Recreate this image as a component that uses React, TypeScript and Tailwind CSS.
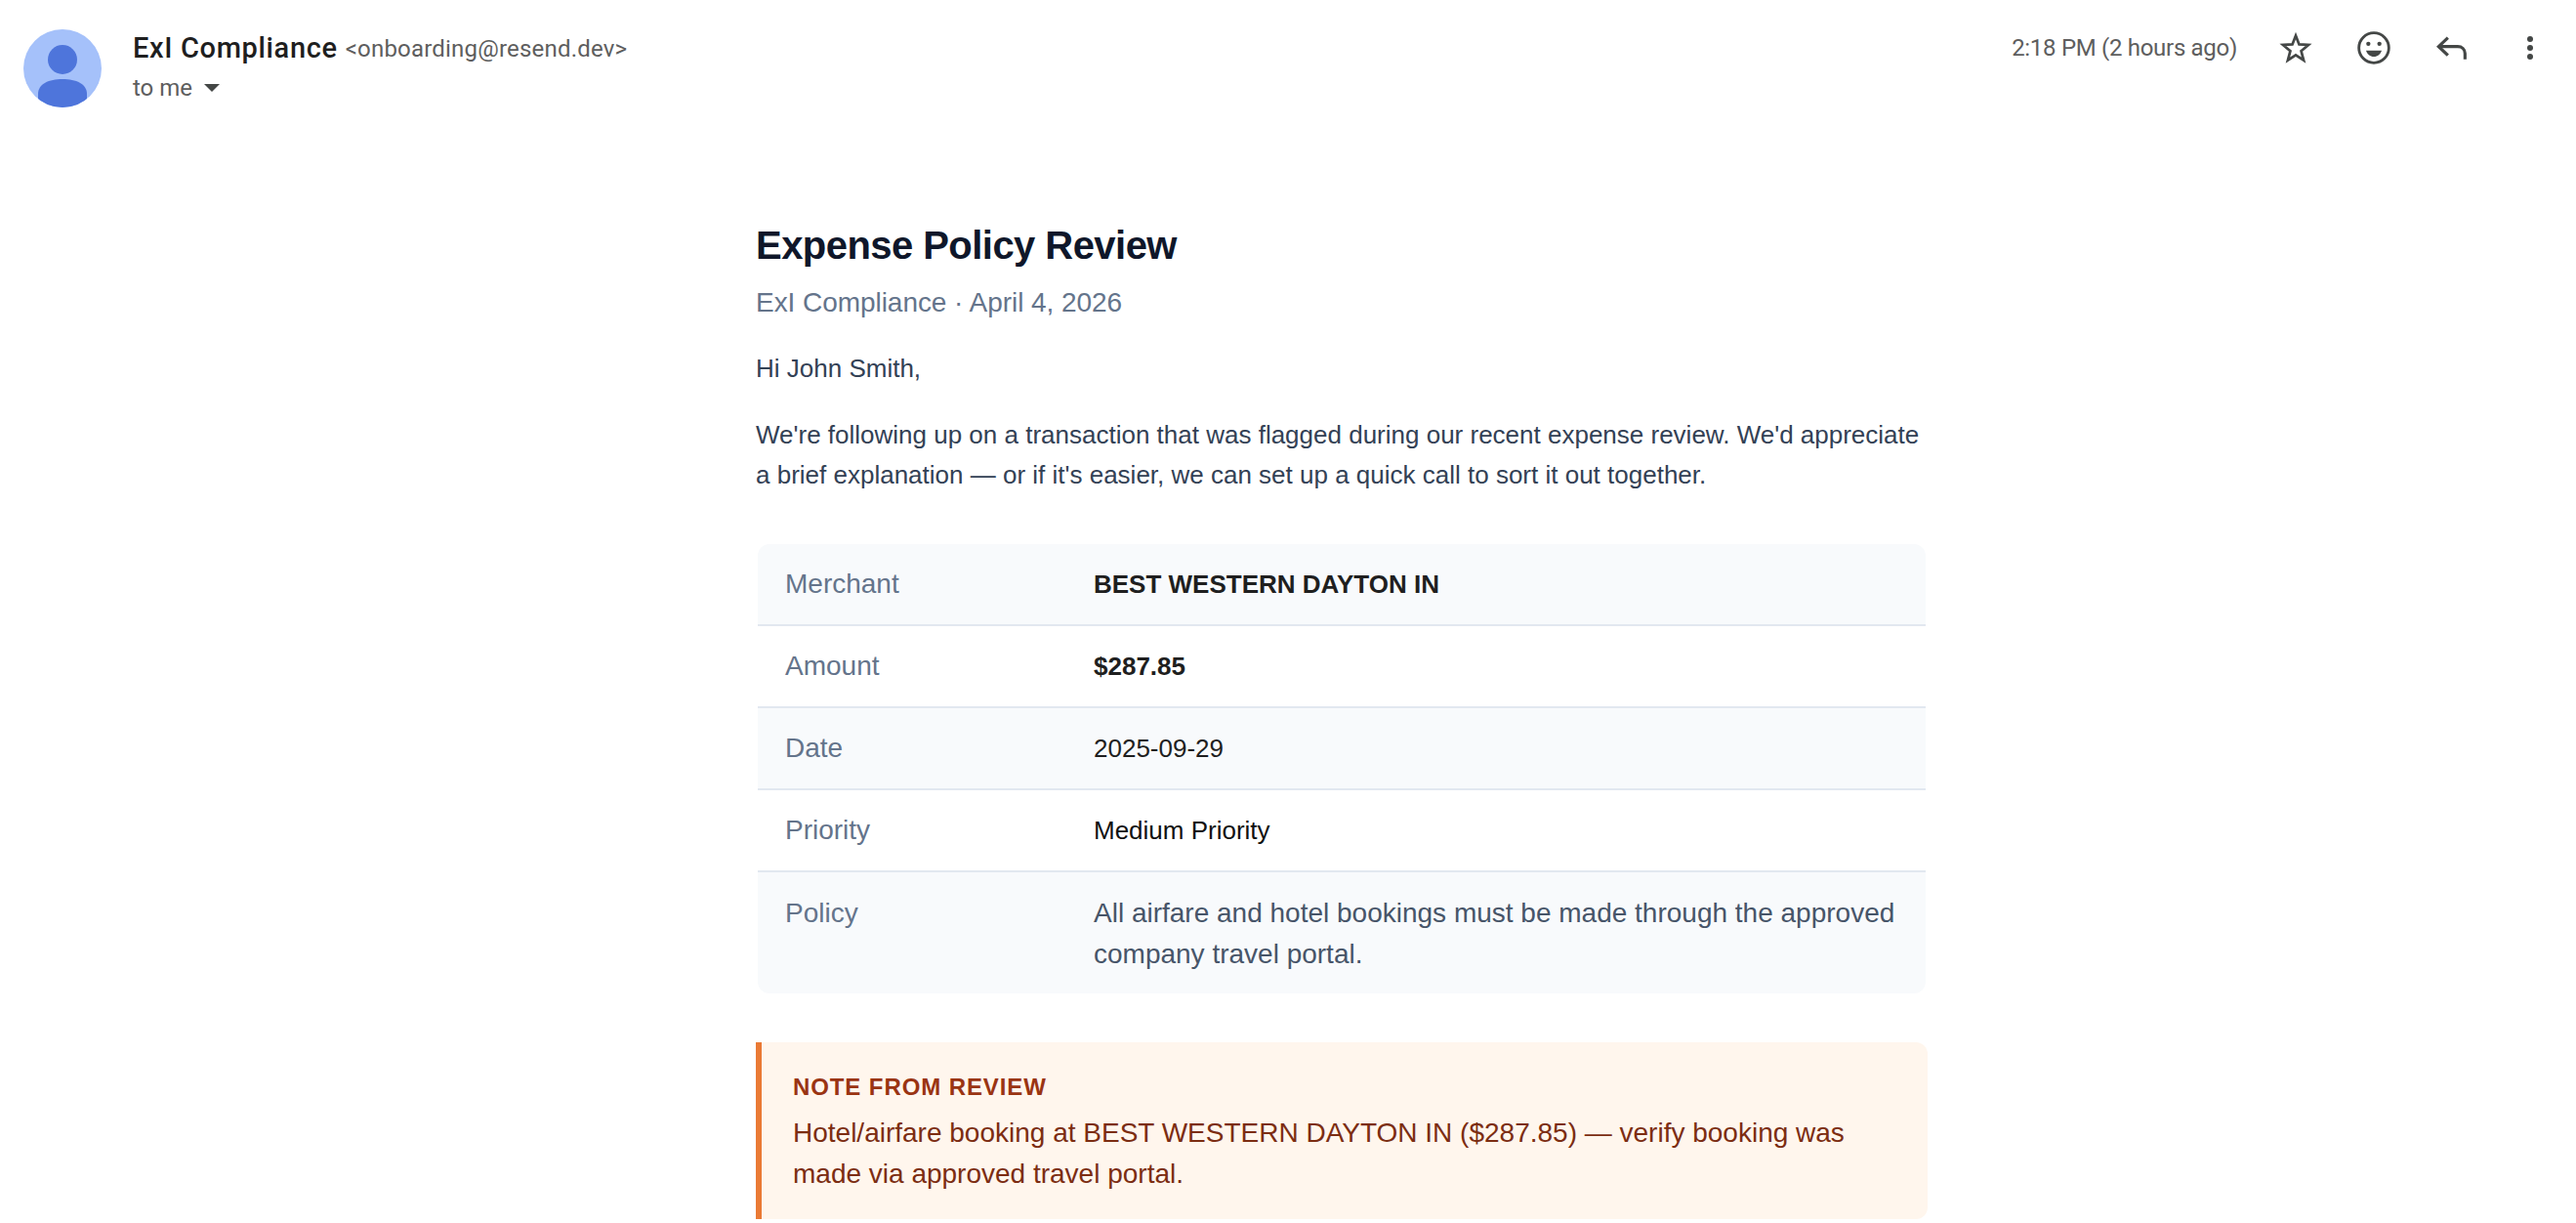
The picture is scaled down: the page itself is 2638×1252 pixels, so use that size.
const rows = [
  { label: "Merchant", value: "BEST WESTERN DAYTON IN", valueClass: "text-[26px] font-bold text-[#1f1f1f]", bg: "bg-[#f8fafc]" },
  { label: "Amount", value: "$287.85", valueClass: "text-[26px] font-bold text-[#1f1f1f]", bg: "bg-white" },
  { label: "Date", value: "2025-09-29", valueClass: "text-[26px] text-[#1f1f1f]", bg: "bg-[#f8fafc]" },
  { label: "Priority", value: "Medium Priority", valueClass: "text-[26px] text-[#111]", bg: "bg-white" },
];

function Avatar() {
  return (
    <svg width="80" height="80" viewBox="0 0 80 80" className="shrink-0">
      <defs>
        <clipPath id="avatar-clip">
          <circle cx="40" cy="40" r="40" />
        </clipPath>
      </defs>
      <circle cx="40" cy="40" r="40" fill="#a5c1fa" />
      <g clipPath="url(#avatar-clip)" fill="#4e75db">
        <ellipse cx="40" cy="31" rx="15" ry="15" />
        <path d="M15 80V66c0-10 11-15 25-15s25 5 25 15v14z" />
      </g>
    </svg>
  );
}

function IconButton({ children }: { children: React.ReactNode }) {
  return <button className="flex h-20 w-20 items-center justify-center text-[#444746]">{children}</button>;
}

export default function App() {
  return (
    <div className="h-[1252px] w-full overflow-hidden bg-white font-['Liberation_Sans',sans-serif]">
      <header className="flex h-[112px] items-start justify-between pl-6 pr-[7px] pt-[30px] font-['Roboto',sans-serif]">
        <div className="flex gap-8">
          <Avatar />
          <div className="flex flex-col">
            <div className="flex h-10 items-center">
              <span className="text-[29px] font-medium tracking-[0.65px] text-[#1f1f1f]">ExI Compliance</span>
              <span className="ml-2 text-[24px] tracking-[0.2px] text-[#5e5e5e]">&lt;onboarding@resend.dev&gt;</span>
            </div>
            <div className="flex h-10 items-center gap-3 text-[24px] text-[#5e5e5e]">
              to me
              <svg width="16" height="8" viewBox="0 0 16 8" fill="#444746">
                <path d="M0 0h16L8 8z" />
              </svg>
            </div>
          </div>
        </div>
        <div className="-mt-[21px] flex items-center">
          <span className="mr-5 text-[24px] tracking-[-0.3px] text-[#5e5e5e]">2:18 PM (2 hours ago)</span>
          <IconButton>
            <svg width="36" height="36" viewBox="0 0 24 24" fill="none" stroke="currentColor" strokeWidth="1.8" strokeLinejoin="miter">
              <path d="M12 3.6l2.3 6 6.4.4-5 4.1 1.7 6.3-5.4-3.5-5.4 3.5 1.7-6.3-5-4.1 6.4-.4z" />
            </svg>
          </IconButton>
          <IconButton>
            <svg width="40" height="40" viewBox="0 0 24 24" fill="none" stroke="currentColor" strokeWidth="1.7">
              <circle cx="12" cy="12" r="9.2" />
              <circle cx="8.6" cy="9.5" r="1.3" fill="currentColor" stroke="none" />
              <circle cx="15.4" cy="9.5" r="1.3" fill="currentColor" stroke="none" />
              <path d="M7.2 13.6h9.6c-.6 2.2-2.5 3.8-4.8 3.8s-4.2-1.6-4.8-3.8z" fill="currentColor" stroke="none" />
            </svg>
          </IconButton>
          <IconButton>
            <svg width="40" height="40" viewBox="0 0 24 24" fill="none" stroke="currentColor" strokeWidth="1.9">
              <path d="M9.5 5.8L3.8 11.2l5.7 5.4" />
              <path d="M4 11.2h11.5c2.6 0 4.5 1.6 4.5 4.3v3.6" />
            </svg>
          </IconButton>
          <IconButton>
            <svg width="40" height="40" viewBox="0 0 24 24" fill="currentColor">
              <circle cx="12" cy="6.6" r="1.8" />
              <circle cx="12" cy="12" r="1.8" />
              <circle cx="12" cy="17.4" r="1.8" />
            </svg>
          </IconButton>
        </div>
      </header>

      <main className="ml-[774px] w-[1200px] pt-[114px]">
        <h1 className="text-[40px] font-bold leading-[50px] tracking-[-0.55px] text-[#0f172a]">Expense Policy Review</h1>
        <p className="mt-[13px] text-[28px] leading-[42px] tracking-[-0.05px] text-[#64748b]">ExI Compliance · April 4, 2026</p>
        <p className="mt-[25px] text-[26px] leading-[42px] text-[#334155]">Hi John Smith,</p>
        <p className="mt-[27px] text-[26px] leading-[41px] text-[#334155]">
          We're following up on a transaction that was flagged during our recent expense review. We'd appreciate a brief
          explanation — or if it's easier, we can set up a quick call to sort it out together.
        </p>

        <div className="ml-[2px] mt-[50px] w-[1196px] overflow-hidden rounded-xl">
          {rows.map((row) => (
            <div key={row.label} className={`flex h-[84px] items-center border-b-2 border-[#e2e8f0] ${row.bg}`}>
              <div className="w-[344px] shrink-0 pl-[28px] text-[28px] text-[#64748b]">{row.label}</div>
              <div className={row.valueClass}>{row.value}</div>
            </div>
          ))}
          <div className="flex h-[124px] items-start bg-[#f8fafc] pt-[21px]">
            <div className="w-[344px] shrink-0 pl-[28px] text-[28px] leading-[42px] text-[#64748b]">Policy</div>
            <div className="w-[832px] text-[28px] leading-[42px] text-[#475569]">
              All airfare and hotel bookings must be made through the approved company travel portal.
            </div>
          </div>
        </div>

        <div className="mt-[50px] h-[181px] w-[1200px] rounded-xl rounded-l-none border-l-[6px] border-[#ea7a35] bg-[#fff6ed] pl-[32px] pt-[31px]">
          <div className="text-[24px] font-bold leading-[30px] tracking-[0.9px] text-[#9a3412]">NOTE FROM REVIEW</div>
          <p className="mt-[11px] w-[1120px] text-[28px] leading-[42px] text-[#7c2d12]">
            Hotel/airfare booking at BEST WESTERN DAYTON IN ($287.85) — verify booking was made via approved travel portal.
          </p>
        </div>
      </main>
    </div>
  );
}
